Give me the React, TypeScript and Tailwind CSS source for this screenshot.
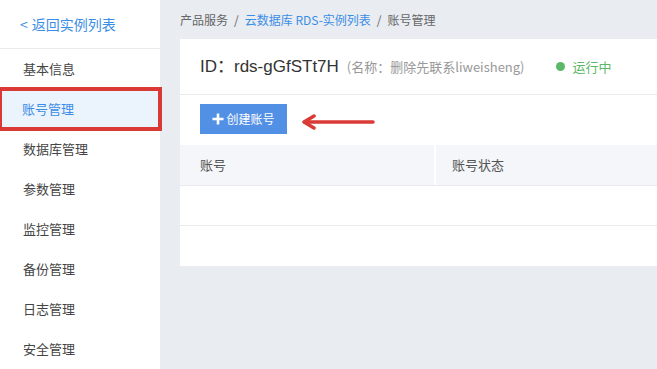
import React from "react";

const items = ["基本信息", "账号管理", "数据库管理", "参数管理", "监控管理", "备份管理", "日志管理", "安全管理"];

export default function App() {
  return (
    <div
      className="flex h-[369px] w-[657px] overflow-hidden bg-[#e9ecf1]"
      style={{ fontFamily: '"PingFang SC", "Noto Sans CJK SC", "Liberation Sans", sans-serif' }}
    >
      <aside className="flex w-[160px] shrink-0 flex-col bg-white">
        <div className="flex h-[49px] items-center border-b border-[#e8eaee] pl-[20px] text-[14px] text-[#3b8ee6]">
          <span className="mr-[4px]">&lt;</span>返回实例列表
        </div>
        {items.map((t) => (
          <div
            key={t}
            className={
              t === "账号管理"
                ? "flex h-[40px] items-center bg-[#ebf3fd] pl-[22px] text-[13px] text-[#3b8ee6] outline outline-[4px] outline-[#d93a36] -outline-offset-[2px] relative"
                : "flex h-[40px] items-center pl-[23px] text-[13px] text-[#444]"
            }
          >
            {t}
          </div>
        ))}
      </aside>
      <main className="flex min-w-0 flex-1 flex-col pl-[20px]">
        <div className="flex h-[39px] items-center gap-[6px] text-[12px] text-[#666]">
          <span>产品服务</span>
          <span>/</span>
          <span className="text-[#3b8ee6]">云数据库 RDS-实例列表</span>
          <span>/</span>
          <span>账号管理</span>
        </div>
        <div className="flex h-[227px] flex-col bg-white">
          <div className="flex h-[56px] shrink-0 items-center border-b border-[#e8eaee] pl-[20px]">
            <span
              className="text-[17px] text-[#333]"
              style={{ fontFamily: '"Liberation Sans", "Noto Sans CJK SC", sans-serif' }}
            >
              ID：rds-gGfSTt7H
            </span>
            <span className="ml-[8px] text-[13px] text-[#999]">(名称：删除先联系liweisheng)</span>
            <span className="ml-[31px] h-[9px] w-[9px] rounded-full bg-[#5ab868]" />
            <span className="ml-[8px] text-[13px] text-[#5ab868]">运行中</span>
          </div>
          <div className="relative flex h-[50px] shrink-0 items-start pl-[20px] pt-[9px]">
            <button className="flex h-[30px] w-[87px] items-center justify-center gap-[2px] bg-[#5290e6] text-[12px] text-white">
              <svg width="12" height="12" viewBox="0 0 12 12">
                <path d="M6 0.5v11M0.5 6h11" stroke="white" strokeWidth="2.6" />
              </svg>
              创建账号
            </button>
            <svg className="absolute left-[121px] top-[19px]" width="75" height="16" viewBox="0 0 75 16">
              <path d="M4 8H72" stroke="#d93a36" strokeWidth="3.5" strokeLinecap="round" />
              <path d="M13 2L3 8L13 14" fill="none" stroke="#d93a36" strokeWidth="3.5" strokeLinecap="round" strokeLinejoin="round" />
            </svg>
          </div>
          <div className="flex h-[41px] shrink-0 border-b border-[#e8eaee] bg-[#f4f6f9] text-[13px] text-[#555]">
            <div className="flex w-[256px] items-center border-r-2 border-white pl-[20px]">账号</div>
            <div className="flex flex-1 items-center pl-[16px]">账号状态</div>
          </div>
          <div className="h-[40px] shrink-0 border-b border-[#e8eaee]" />
          <div className="flex-1" />
        </div>
      </main>
    </div>
  );
}
